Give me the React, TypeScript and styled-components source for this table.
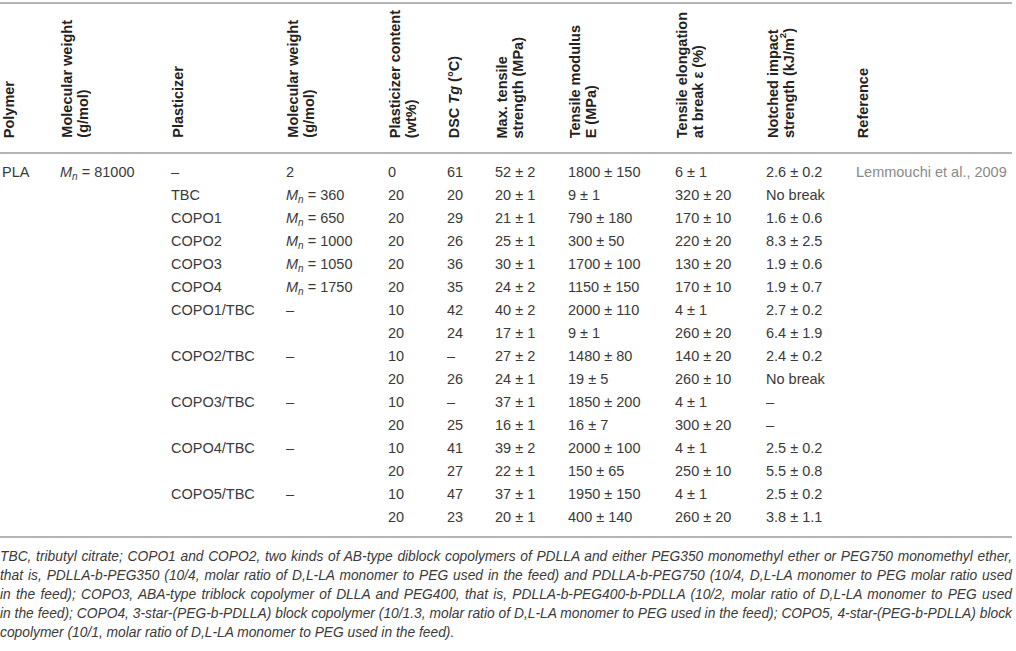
import React from "react";
import styled, { createGlobalStyle } from "styled-components";

const Global = createGlobalStyle`
  html, body { margin: 0; padding: 0; background: #ffffff; }
  body { font-family: "Liberation Sans", Arial, Helvetica, sans-serif; }
`;

const COLS = "58px 111px 115px 102px 59px 48px 73px 107px 91px 90px 158px";

const Page = styled.div`
  width: 1012px;
  padding-top: 2px;
  color: #3a3a3a;
`;

const Table = styled.div`
  border-top: 2px solid #b4b4b4;
`;

const HeadRow = styled.div`
  display: grid;
  grid-template-columns: ${COLS};
  height: 148px;
  border-bottom: 2px solid #b4b4b4;
`;

const HeadCell = styled.div`
  display: flex;
  align-items: flex-end;
  padding: 0 0 14px 1px;
`;

const VerticalLabel = styled.span`
  writing-mode: vertical-rl;
  transform: rotate(180deg);
  white-space: nowrap;
  font-weight: 700;
  font-size: 14.5px;
  line-height: 16px;
  color: #222222;
`;

const Body = styled.div`
  padding: 7px 0;
  border-bottom: 2px solid #b4b4b4;
`;

const Row = styled.div`
  display: grid;
  grid-template-columns: ${COLS};
  height: 23px;
`;

const Cell = styled.div<{ $muted?: boolean }>`
  padding-left: 2px;
  font-size: 14.5px;
  line-height: 23px;
  white-space: nowrap;
  color: ${(p) => (p.$muted ? "#8a8a8a" : "#3a3a3a")};
`;

const Ital = styled.i`
  font-style: italic;
`;

const Sub = styled.sub`
  font-style: italic;
  font-size: 10px;
  line-height: 0;
  vertical-align: -3px;
`;

const Sup = styled.sup`
  font-size: 9.5px;
  line-height: 0;
  vertical-align: 6px;
`;

const Footnote = styled.div`
  margin-top: 9px;
  font-style: italic;
  font-size: 13.8px;
  line-height: 19px;
  color: #3a3a3a;
`;

const FootLine = styled.span<{ $last?: boolean }>`
  display: block;
  white-space: nowrap;
  text-align: ${(p) => (p.$last ? "left" : "justify")};
  text-align-last: ${(p) => (p.$last ? "left" : "justify")};
`;

const Mn = ({ v }: { v: string }) => (
  <>
    <Ital>M</Ital>
    <Sub>n</Sub> = {v}
  </>
);

type Cellv = React.ReactNode;

const rows: Cellv[][] = [
  ["PLA", <Mn v="81000" />, "–", "2", "0", "61", "52 ± 2", "1800 ± 150", "6 ± 1", "2.6 ± 0.2", "Lemmouchi et al., 2009"],
  ["", "", "TBC", <Mn v="360" />, "20", "20", "20 ± 1", "9 ± 1", "320 ± 20", "No break", ""],
  ["", "", "COPO1", <Mn v="650" />, "20", "29", "21 ± 1", "790 ± 180", "170 ± 10", "1.6 ± 0.6", ""],
  ["", "", "COPO2", <Mn v="1000" />, "20", "26", "25 ± 1", "300 ± 50", "220 ± 20", "8.3 ± 2.5", ""],
  ["", "", "COPO3", <Mn v="1050" />, "20", "36", "30 ± 1", "1700 ± 100", "130 ± 20", "1.9 ± 0.6", ""],
  ["", "", "COPO4", <Mn v="1750" />, "20", "35", "24 ± 2", "1150 ± 150", "170 ± 10", "1.9 ± 0.7", ""],
  ["", "", "COPO1/TBC", "–", "10", "42", "40 ± 2", "2000 ± 110", "4 ± 1", "2.7 ± 0.2", ""],
  ["", "", "", "", "20", "24", "17 ± 1", "9 ± 1", "260 ± 20", "6.4 ± 1.9", ""],
  ["", "", "COPO2/TBC", "–", "10", "–", "27 ± 2", "1480 ± 80", "140 ± 20", "2.4 ± 0.2", ""],
  ["", "", "", "", "20", "26", "24 ± 1", "19 ± 5", "260 ± 10", "No break", ""],
  ["", "", "COPO3/TBC", "–", "10", "–", "37 ± 1", "1850 ± 200", "4 ± 1", "–", ""],
  ["", "", "", "", "20", "25", "16 ± 1", "16 ± 7", "300 ± 20", "–", ""],
  ["", "", "COPO4/TBC", "–", "10", "41", "39 ± 2", "2000 ± 100", "4 ± 1", "2.5 ± 0.2", ""],
  ["", "", "", "", "20", "27", "22 ± 1", "150 ± 65", "250 ± 10", "5.5 ± 0.8", ""],
  ["", "", "COPO5/TBC", "–", "10", "47", "37 ± 1", "1950 ± 150", "4 ± 1", "2.5 ± 0.2", ""],
  ["", "", "", "", "20", "23", "20 ± 1", "400 ± 140", "260 ± 20", "3.8 ± 1.1", ""],
];

const headers: React.ReactNode[] = [
  "Polymer",
  <>Molecular weight<br />(g/mol)</>,
  "Plasticizer",
  <>Molecular weight<br />(g/mol)</>,
  <>Plasticizer content<br />(wt%)</>,
  <>DSC <Ital>Tg</Ital> (°C)</>,
  <>Max. tensile<br />strength (MPa)</>,
  <>Tensile modulus<br />E (MPa)</>,
  <>Tensile elongation<br />at break ε (%)</>,
  <>Notched impact<br />strength (kJ/m<Sup>2</Sup>)</>,
  "Reference",
];

const footLines = [
  "TBC, tributyl citrate; COPO1 and COPO2, two kinds of AB-type diblock copolymers of PDLLA and either PEG350 monomethyl ether or PEG750 monomethyl ether,",
  "that is, PDLLA-b-PEG350 (10/4, molar ratio of D,L-LA monomer to PEG used in the feed) and PDLLA-b-PEG750 (10/4, D,L-LA monomer to PEG molar ratio used",
  "in the feed); COPO3, ABA-type triblock copolymer of DLLA and PEG400, that is, PDLLA-b-PEG400-b-PDLLA (10/2, molar ratio of D,L-LA monomer to PEG used",
  "in the feed); COPO4, 3-star-(PEG-b-PDLLA) block copolymer (10/1.3, molar ratio of D,L-LA monomer to PEG used in the feed); COPO5, 4-star-(PEG-b-PDLLA) block",
  "copolymer (10/1, molar ratio of D,L-LA monomer to PEG used in the feed).",
];

export default function App() {
  return (
    <Page>
      <Global />
      <Table>
        <HeadRow>
          {headers.map((h, i) => (
            <HeadCell key={i}>
              <VerticalLabel>{h}</VerticalLabel>
            </HeadCell>
          ))}
        </HeadRow>
        <Body>
          {rows.map((r, ri) => (
            <Row key={ri}>
              {r.map((c, ci) => (
                <Cell key={ci} $muted={ci === 10}>
                  {c}
                </Cell>
              ))}
            </Row>
          ))}
        </Body>
      </Table>
      <Footnote>
        {footLines.map((l, i) => (
          <FootLine key={i} $last={i === footLines.length - 1}>
            {l}
          </FootLine>
        ))}
      </Footnote>
    </Page>
  );
}
